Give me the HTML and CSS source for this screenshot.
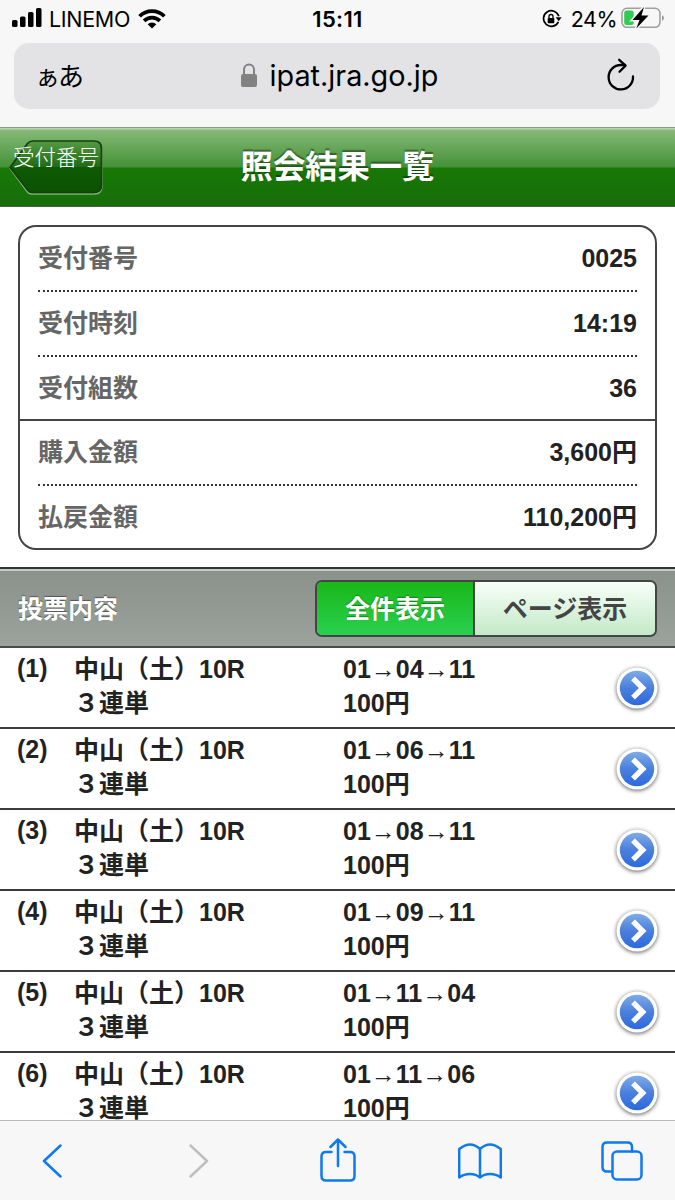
FILE: index.html
```html
<!DOCTYPE html>
<html lang="ja">
<head>
<meta charset="utf-8">
<title>照会結果一覧</title>
<link rel="stylesheet" href="styles.css">
</head>
<body>
<svg class="defs" width="0" height="0" aria-hidden="true">
  <defs>
    <linearGradient id="disc" x1="0" y1="0" x2="0" y2="1"><stop offset="0" stop-color="#7fabe8"/><stop offset=".5" stop-color="#4a80dc"/><stop offset="1" stop-color="#2c69df"/></linearGradient>
    <symbol id="go" viewBox="0 0 42 42"><circle cx="21" cy="21" r="20.5" fill="#fff"/><circle cx="21" cy="21" r="17.2" fill="url(#disc)"/><path d="M17 11.300 26.700 21 17 30.700" fill="none" stroke="#fff" stroke-width="5.400"/></symbol>
  </defs>
</svg>
<div class="phone">
  <header class="browser">
    <div class="status">
      <div class="status-left">
        <svg class="signal" width="30" height="20" viewBox="0 0 30 20"><rect x="0" y="12" width="5.500" height="7" rx="1.500"/><rect x="8" y="8.500" width="5.500" height="10.500" rx="1.500"/><rect x="16" y="4" width="5.500" height="15" rx="1.500"/><rect x="24" y="0" width="5.500" height="19" rx="1.500"/></svg>
        <span class="carrier">LINEMO</span>
        <svg class="wifi" width="28" height="20" viewBox="0 0 28 20"><g fill="none" stroke="#000" stroke-width="3.700"><path d="M1.600 7.300a17.500 17.500 0 0 1 24.800 0"/><path d="M6.100 11.900a11.200 11.200 0 0 1 15.800 0"/></g><path d="M14 19.500 9.700 15.200a6 6 0 0 1 8.600 0z"/></svg>
      </div>
      <span class="clock">15:11</span>
      <div class="status-right">
        <svg width="20" height="20" viewBox="0 0 20 20"><path d="M16.400 12.800A7.800 7.800 0 1 1 16.800 7.300" fill="none" stroke="#000" stroke-width="1.700"/><path d="M13.700 8.300h5.900l-2.900 4z"/><rect x="5.700" y="9" width="6.600" height="5.200" rx=".8"/><path d="M7 9V7.500a2 2 0 0 1 4 0V9" fill="none" stroke="#000" stroke-width="1.300"/></svg>
        <span class="percent">24%</span>
        <svg class="battery" width="44" height="24" viewBox="0 0 44 24"><rect x="1" y="2.300" width="38" height="19" rx="5" fill="none" stroke="#a0a0a0" stroke-width="1.600"/><path d="M41 9q4 3 0 6z" fill="#999"/><rect x="3.200" y="4.500" width="9.500" height="14.600" rx="2.500" fill="#2fcb53"/><path d="M23 1 11.500 14h7L15.300 22.500 27.500 9.500h-7z" fill="#000" stroke="#f7f7f7" stroke-width="3" paint-order="stroke"/></svg>
      </div>
    </div>
    <div class="address">
      <span class="reader"><small>ぁ</small>あ</span>
      <div class="site">
        <svg width="18" height="26" viewBox="0 0 18 26"><rect x="1" y="11" width="16" height="13" rx="2" fill="#828282"/><path d="M4 12V6.500a5 5 0 0 1 10 0V12" fill="none" stroke="#828282" stroke-width="2"/></svg>
        <span class="url">ipat.jra.go.jp</span>
      </div>
      <svg class="reload" width="30" height="36" viewBox="0 0 30 36"><g fill="none" stroke="#000" stroke-width="2.300" stroke-linecap="round" stroke-linejoin="round"><path d="M27 18.500A12.200 12.200 0 1 1 14.800 7h4"/><path d="M13.200 1.800 19.600 7.600 13.500 13.700"/></g></svg>
    </div>
  </header>
  <nav class="titlebar">
    <a class="back">
      <svg width="96" height="56" viewBox="0 0 96 56"><defs><linearGradient id="bk" x1="0" y1="0" x2="0" y2="1"><stop offset="0" stop-color="#559a45"/><stop offset=".5" stop-color="#1f6b14"/><stop offset=".51" stop-color="#0f5a05"/><stop offset="1" stop-color="#0b5203"/></linearGradient></defs><path d="M24 2.500h61.500q7.500 0 7.500 7.500v36q0 8-8 8H23q-3 0-4.500-2L1 28.500z" fill="none" stroke="#7fb874" stroke-width="1.400"/><path d="M24 1h61q7.500 0 7.500 7.500V45q0 7.500-7.500 7.500H23q-2.500 0-4-2L1 27.500 18.500 3.500Q20.500 1 24 1z" fill="url(#bk)" stroke="#153f0e" stroke-width="1.700"/></svg>
      <span>受付番号</span>
    </a>
    <h1>照会結果一覧</h1>
  </nav>
  <main class="content">
    <dl class="summary">
      <div><dt>受付番号</dt><dd>0025</dd></div>
      <div><dt>受付時刻</dt><dd>14:19</dd></div>
      <div class="last"><dt>受付組数</dt><dd>36</dd></div>
    </dl>
    <dl class="summary money">
      <div><dt>購入金額</dt><dd>3,600円</dd></div>
      <div class="last"><dt>払戻金額</dt><dd>110,200円</dd></div>
    </dl>
    <div class="section">
      <h2>投票内容</h2>
      <div class="tabs"><span class="on">全件表示</span><span class="off">ページ表示</span></div>
    </div>
    <ul class="bets">
      <li><span class="no">(1)</span><p>中山（土）10R<br>３連単</p><p>01<i>→</i>04<i>→</i>11<br>100円</p><svg class="go"><use href="#go"/></svg></li>
      <li><span class="no">(2)</span><p>中山（土）10R<br>３連単</p><p>01<i>→</i>06<i>→</i>11<br>100円</p><svg class="go"><use href="#go"/></svg></li>
      <li><span class="no">(3)</span><p>中山（土）10R<br>３連単</p><p>01<i>→</i>08<i>→</i>11<br>100円</p><svg class="go"><use href="#go"/></svg></li>
      <li><span class="no">(4)</span><p>中山（土）10R<br>３連単</p><p>01<i>→</i>09<i>→</i>11<br>100円</p><svg class="go"><use href="#go"/></svg></li>
      <li><span class="no">(5)</span><p>中山（土）10R<br>３連単</p><p>01<i>→</i>11<i>→</i>04<br>100円</p><svg class="go"><use href="#go"/></svg></li>
      <li><span class="no">(6)</span><p>中山（土）10R<br>３連単</p><p>01<i>→</i>11<i>→</i>06<br>100円</p><svg class="go"><use href="#go"/></svg></li>
    </ul>
  </main>
  <footer class="toolbar">
    <svg width="20" height="34" viewBox="0 0 20 34"><path d="M18.500 1.500 2 17l16.500 15.500"/></svg>
    <svg class="disabled" width="20" height="34" viewBox="0 0 20 34"><path d="M1.500 1.500 18 17 1.500 32.500"/></svg>
    <svg class="share" width="36" height="44" viewBox="0 0 36 44"><path d="M11.500 14H6q-4.500 0-4.500 4.500v19.500Q1.500 42.500 6 42.500h24q4.500 0 4.500-4.500V18.500Q34.500 14 30 14h-5.500M18 28V2M10.500 9 18 1.500 25.500 9"/></svg>
    <svg width="44" height="36" viewBox="0 0 44 36"><path d="M22 34.500V6Q17 1.500 12 1.500T1.200 6v28.500Q6 31 12 31t10 3.500Q26 31 32 31t10.800 3.500V6Q37 1.500 32 1.500T22 6"/></svg>
    <svg width="42" height="40" viewBox="0 0 42 40"><path d="M10.500 30.500H6q-4.500 0-4.500-4.500V6Q1.500 1.500 6 1.500h20.500Q31 1.500 31 6v4.500"/><rect x="11.500" y="10.500" width="29" height="28" rx="4.500"/></svg>
  </footer>
</div>
</body>
</html>
```
FILE: styles.css
```css
* { box-sizing: border-box; margin: 0; padding: 0; }
body {
  width: 675px;
  height: 1200px;
  overflow: hidden;
  background: #fff;
  color: #222;
  font: bold 25px "Liberation Sans", "Noto Sans CJK JP", sans-serif;
}
svg { display: block; flex: none; }
.defs { position: absolute; }
.phone { display: flex; flex-direction: column; height: 1200px; }

.browser {
  flex: none;
  height: 127px;
  background: #f7f7f7;
  color: #000;
  font-family: Inter, "Noto Sans CJK JP", sans-serif;
  font-weight: 400;
}
.status {
  display: grid;
  grid-template-columns: 1fr auto 1fr;
  align-items: center;
  height: 37px;
  padding: 0 10px 0 12px;
  font-size: 22px;
}
.status-left, .status-right { display: flex; align-items: center; }
.status-right { justify-content: flex-end; gap: 5px; }
.signal { margin: -1px 7px 0 0; }
.wifi { margin-left: 8px; }
.carrier { font-size: 21.500px; letter-spacing: -.3px; }
.clock { margin-left: -2px; font-weight: 600; letter-spacing: .3px; }
.percent { margin-left: 4px; font-size: 21.500px; letter-spacing: -.5px; }
.battery { margin: -2px 0 0 -1px; }
.address {
  display: grid;
  grid-template-columns: 1fr auto 1fr;
  align-items: center;
  height: 66px;
  margin: 6px 15px 0 14px;
  padding: 0 24px 0 21px;
  border-radius: 15px;
  background: #e3e3e5;
}
.reader { display: flex; align-items: baseline; padding-top: 2px; font-size: 26px; font-weight: 400; line-height: 34px; }
.reader small { margin-right: -2px; font-size: 25px; }
.site { display: flex; align-items: center; gap: 12px; padding-left: 7px; }
.url { font-size: 28.800px; line-height: 34px; }
.reload { justify-self: end; margin-top: -1px; }

.titlebar {
  display: grid;
  flex: none;
  align-items: center;
  height: 80px;
  border-top: 1px solid #8b9b87;
  border-bottom: 1px solid #4c604a;
  background: linear-gradient(#b8d5b0 0 1px, #86ba78 2px, #449137 39px, #187806 40px, #176d0a);
}
.titlebar > * { grid-area: 1 / 1; }
.titlebar h1 {
  text-align: center;
  color: #fff;
  font-size: 32.300px;
  line-height: 40px;
  text-shadow: 0 -2px 1px rgba(0, 0, 0, .4);
}
.back { display: grid; align-self: start; justify-self: start; margin: 12px 0 0 9px; color: #fff; font-size: 21.500px; font-weight: 300; }
.back > * { grid-area: 1 / 1; }
.back span { margin: 3px 0 0 4px; line-height: 30px; }

.content { flex: 1; min-height: 0; overflow: hidden; }
.summary {
  height: 194px;
  margin: 18px 18px 0;
  border: 2px solid #444;
  border-bottom: 0;
  border-radius: 18px 18px 0 0;
}
.summary div {
  display: flex;
  justify-content: space-between;
  height: 65px;
  margin: 0 18px;
  border-bottom: 2px dotted #333;
  line-height: 62px;
}
.summary .last { height: 62px; border-bottom: 0; }
.money {
  height: 131px;
  margin-top: 0;
  border-bottom: 2px solid #444;
  border-radius: 0 0 18px 18px;
}
dt { color: #666; }

.section {
  display: flex;
  justify-content: space-between;
  align-items: center;
  height: 81px;
  margin-top: 17px;
  padding: 2px 18px 1px;
  border-top: 2px solid #333;
  border-bottom: 2px solid #4a4a4a;
  background: linear-gradient(#c6cac6 0 2px, #8b918b 2px, #9ba39d);
}
.section h2 { padding-bottom: 3px; color: #fff; font-size: 25px; text-shadow: 0 -1px 1px #555; }
.tabs {
  display: grid;
  grid-template-columns: 158px 1fr;
  width: 342px;
  height: 57px;
  overflow: hidden;
  border: 2px solid #444;
  border-radius: 7px;
}
.tabs span { display: grid; place-items: center; padding-bottom: 2px; }
.tabs .on { border-right: 2px solid #444; background: linear-gradient(#18b818, #2bd050); color: #fff; text-shadow: 0 -1px 1px #197c25; }
.tabs .off { background: linear-gradient(#f8fff8, #c3e9c7); color: #444; }

.bets { list-style: none; }
.bets li {
  display: grid;
  grid-template-columns: 57px 269px 1fr 42px;
  height: 81px;
  padding: 4px 17px 0 17px;
  border-bottom: 2px solid #3c3c3c;
  line-height: 34px;
}
.bets i { font-family: "Liberation Serif", serif; font-style: normal; font-weight: 400; line-height: 1; }
.no { margin-top: -1px; }
.go { width: 42px; height: 42px; margin-top: 15px; filter: drop-shadow(0 1px 2px rgba(0, 0, 0, .65)); }

.toolbar {
  display: grid;
  flex: none;
  grid-template-columns: 147px 131px 138px 143px 42px;
  align-items: center;
  height: 80px;
  padding-left: 42px;
  border-top: 1px solid #bbb;
  background: #f7f7f7;
}
.toolbar svg { fill: none; stroke: #0f7af0; stroke-width: 2.500; stroke-linecap: round; stroke-linejoin: round; }
.toolbar .share { margin-top: -2px; }
.toolbar .disabled { stroke: #bfbfbf; }
```
